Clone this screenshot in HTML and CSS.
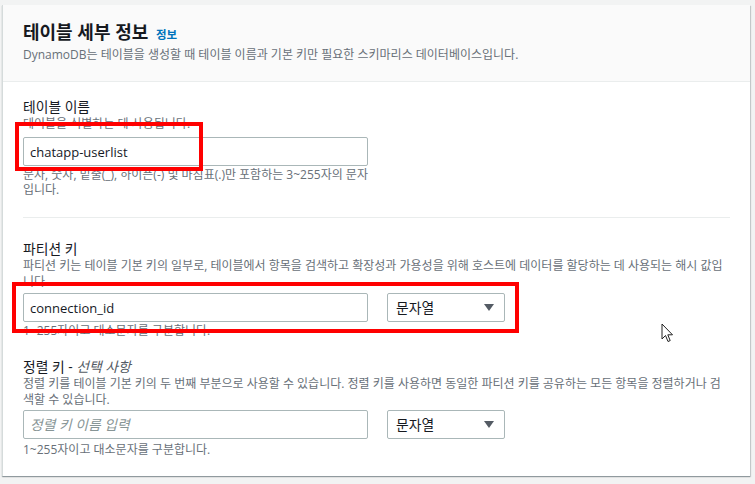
FILE: index.html
```html
<!DOCTYPE html>
<html lang="ko">
<head>
    <meta charset="UTF-8">
    <meta name="viewport" content="width=device-width, initial-scale=1.0">
    <title>테이블 세부 정보</title>
    <link rel="stylesheet" href="styles.css">
</head>

<body>

<div class="card">
    <div class="card-header">
        <h2 class="title">테이블 세부 정보 <a href="#" class="info">정보</a></h2>
        <p class="desc">DynamoDB는 테이블을 생성할 때 테이블 이름과 기본 키만 필요한 스키마리스 데이터베이스입니다.</p>
    </div>

    <div class="card-body">
        <!-- 테이블 이름 -->
        <div class="field">
            <label class="label" for="tableName">테이블 이름</label>
            <p class="desc">테이블을 식별하는 데 사용됩니다.</p>
            <div class="row">
                <div class="col">
                    <div class="mark">
                        <input type="text" id="tableName" class="input" value="chatapp-userlist">
                        <span class="highlight hl-name"></span>
                    </div>
                    <p class="help">문자, 숫자, 밑줄(_), 하이픈(-) 및 마침표(.)만 포함하는 3~255자의 문자입니다.</p>
                </div>
            </div>
        </div>

        <hr class="divider">

        <!-- 파티션 키 -->
        <div class="field field-key">
            <label class="label" for="pk">파티션 키</label>
            <p class="desc">파티션 키는 테이블 기본 키의 일부로, 테이블에서 항목을 검색하고 확장성과 가용성을 위해 호스트에 데이터를 할당하는 데 사용되는 해시 값입니다.</p>
            <div class="row">
                <div class="col">
                    <div class="mark">
                        <input type="text" id="pk" class="input" value="connection_id">
                        <span class="highlight hl-key"></span>
                    </div>
                    <p class="help">1~255자이고 대소문자를 구분합니다.</p>
                </div>
                <div class="select">문자열<span class="caret"></span></div>
            </div>
        </div>

        <!-- 정렬 키 -->
        <div class="field field-sort">
            <label class="label" for="sk">정렬 키 - <i>선택 사항</i></label>
            <p class="desc">정렬 키를 테이블 기본 키의 두 번째 부분으로 사용할 수 있습니다. 정렬 키를 사용하면 동일한 파티션 키를 공유하는 모든 항목을 정렬하거나 검색할 수 있습니다.</p>
            <div class="row">
                <div class="col">
                    <input type="text" id="sk" class="input" placeholder="정렬 키 이름 입력">
                    <p class="help">1~255자이고 대소문자를 구분합니다.</p>
                </div>
                <div class="select">문자열<span class="caret"></span></div>
            </div>
        </div>
    </div>
</div>

<svg class="cursor" width="13" height="21" viewBox="0 0 13 21">
    <path d="M1 1 L1 16 L4.5 12.5 L7 18.5 L9.2 17.6 L6.8 11.8 L11.5 11.8 Z" fill="#fff" stroke="#222" stroke-width="1" stroke-linejoin="round"/>
</svg>

</body>
</html>
```

FILE: styles.css
```css
body {
    margin: 0;
    padding: 5px 5px 7px 2px;
    background: #f2f3f3;
    font-family: "Open Sans", "Noto Sans CJK KR", sans-serif;
    color: #16191f;
    position: relative;
}

.card {
    background: #fff;
    border-left: 1px solid #d5dbdb;
    box-shadow: 0 1px 1px 0 rgba(0, 28, 36, 0.3), 1px 1px 1px 0 rgba(0, 28, 36, 0.15);
}

.card-header {
    background: #fafafa;
    border-bottom: 1px solid #eaeded;
    padding: 15px 20px 18px 20px;
}

.title {
    margin: 0;
    font-size: 18px;
    line-height: 24px;
    font-weight: 700;
}
.info {
    font-size: 11.5px;
    line-height: 1;
    color: #0073bb;
    text-decoration: none;
    margin-left: 3px;
}

.desc {
    margin: 0;
    font-size: 12px;
    line-height: 16px;
    color: #687078;
}
.card-header .desc {
    margin-top: 3px;
}

.card-body {
    padding: 16px 22px 19px 20px;
}

.label {
    display: block;
    font-size: 13.8px;
    line-height: 18px;
}
.label i {
    color: #545b64;
}

.row {
    display: flex;
    gap: 19px;
    margin-top: 5px;
}
.col {
    width: 345px;
}

.mark {
    position: relative;
}

.input {
    display: block;
    box-sizing: border-box;
    width: 345px;
    height: 29px;
    margin: 0;
    padding: 0 6px;
    border: 1px solid #aab7b8;
    border-radius: 2px;
    font-family: inherit;
    font-size: 13px;
    color: #16191f;
    outline: none;
}
.input::placeholder {
    color: #879596;
    font-style: italic;
    font-size: 13.8px;
}

.help {
    margin: 1px 0 0 0;
    font-size: 12px;
    line-height: 15px;
    color: #687078;
}

.select {
    box-sizing: border-box;
    width: 118px;
    height: 29px;
    border: 1px solid #aab7b8;
    border-radius: 2px;
    padding: 0 8px;
    font-size: 13.8px;
    line-height: 27px;
    display: flex;
    justify-content: space-between;
    align-items: center;
}
.caret {
    width: 0;
    height: 0;
    margin-right: 2px;
    border-left: 5px solid transparent;
    border-right: 5px solid transparent;
    border-top: 7px solid #545b64;
}

.divider {
    border: 0;
    border-top: 1px solid #eaeded;
    margin: 20px -2px 22px 0;
}

.field-key .row {
    margin-top: 3px;
}

.field-sort {
    margin-top: 20px;
}
.field-sort .row {
    margin-top: 2px;
}
.field-sort .help {
    margin-top: 3px;
}

/* 빨간 표시 박스 */
.highlight {
    position: absolute;
    border: 4px solid #ff0000;
    box-sizing: border-box;
    pointer-events: none;
}
.hl-name {
    left: -8px;
    top: -15px;
    width: 188px;
    height: 49px;
}
.hl-key {
    left: -11px;
    top: -11px;
    width: 507px;
    height: 51px;
}

.cursor {
    position: absolute;
    left: 661px;
    top: 323px;
}
```
